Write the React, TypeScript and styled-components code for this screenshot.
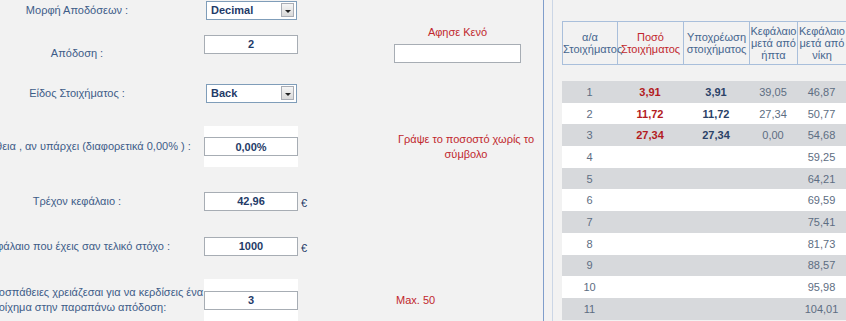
import styled, { createGlobalStyle } from "styled-components";

const GlobalStyle = createGlobalStyle`
  html, body {
    margin: 0;
    background: #f2f2f2;
    overflow: hidden;
  }
  body {
    font-family: "Liberation Sans", Arial, sans-serif;
  }
`;

const rows = [
  { no: 1, stake: "3,91", liability: "3,91", lose: "39,05", win: "46,87" },
  { no: 2, stake: "11,72", liability: "11,72", lose: "27,34", win: "50,77" },
  { no: 3, stake: "27,34", liability: "27,34", lose: "0,00", win: "54,68" },
  { no: 4, win: "59,25" },
  { no: 5, win: "64,21" },
  { no: 6, win: "69,59" },
  { no: 7, win: "75,41" },
  { no: 8, win: "81,73" },
  { no: 9, win: "88,57" },
  { no: 10, win: "95,98" },
  { no: 11, win: "104,01" },
];

const colWidths = [55, 66, 66, 48, 49];

const Cols = () => (
  <colgroup>
    {colWidths.map((w, i) => (
      <col key={i} style={{ width: w }} />
    ))}
  </colgroup>
);

export default function App() {
  return (
    <>
      <GlobalStyle />
      <Page>
        <FormArea>
          <FormRow $mt={0} $h={20}>
            <Label>Μορφή Αποδόσεων :</Label>
            <InputCell>
              <SelectBox>
                Decimal
                <ArrowBtn />
              </SelectBox>
            </InputCell>
          </FormRow>

          <FormRow $mt={5} $align="end">
            <Label>Απόδοση :</Label>
            <InputCell>
              <TextBox readOnly value="2" />
            </InputCell>
            <span />
            <NoteStack>
              <Note>Αφησε Κενό</Note>
              <BlankBox readOnly value="" />
            </NoteStack>
          </FormRow>

          <FormRow $mt={20} $h={20}>
            <Label>Είδος Στοιχήματος :</Label>
            <InputCell>
              <SelectBox>
                Back
                <ArrowBtn />
              </SelectBox>
            </InputCell>
          </FormRow>

          <FormRow $mt={23} $h={41}>
            <Label>Προμήθεια , αν υπάρχει (διαφορετικά 0,00% ) :</Label>
            <InputCell $white>
              <TextBox readOnly value="0,00%" />
            </InputCell>
            <span />
            <Note $center>Γράψε το ποσοστό χωρίς το σύμβολο</Note>
          </FormRow>

          <FormRow $mt={24} $h={20}>
            <Label>Τρέχον κεφάλαιο :</Label>
            <InputCell>
              <TextBox readOnly value="42,96" />
            </InputCell>
            <Euro>€</Euro>
          </FormRow>

          <FormRow $mt={25} $h={20}>
            <Label>Κεφάλαιο που έχεις σαν τελικό στόχο :</Label>
            <InputCell>
              <TextBox readOnly value="1000" />
            </InputCell>
            <Euro>€</Euro>
          </FormRow>

          <FormRow $mt={23} $h={42}>
            <Label>
              Πόσες προσπάθειες χρειάζεσαι για να κερδίσεις ένα στοίχημα στην
              παραπάνω απόδοση:
            </Label>
            <InputCell $white>
              <TextBox readOnly value="3" />
            </InputCell>
            <span />
            <Note>Max. 50</Note>
          </FormRow>
        </FormArea>

        <RightPanel>
          <Inner>
            <HeadTable>
              <Cols />
              <thead>
                <tr>
                  <HeadCell>
                    α/α
                    <br />
                    Στοιχήματος
                  </HeadCell>
                  <HeadCell $red>
                    Ποσό
                    <br />
                    Στοιχήματος
                  </HeadCell>
                  <HeadCell>
                    Υποχρέωση
                    <br />
                    στοιχήματος
                  </HeadCell>
                  <HeadCell>
                    Κεφάλαιο
                    <br />
                    μετά από
                    <br />
                    ήπτα
                  </HeadCell>
                  <HeadCell>
                    Κεφάλαιο
                    <br />
                    μετά από
                    <br />
                    νίκη
                  </HeadCell>
                </tr>
              </thead>
            </HeadTable>

            <DataTable>
              <Cols />
              <tbody>
                {rows.map((r) => (
                  <tr key={r.no}>
                    <Cell>{r.no}</Cell>
                    <Cell $kind="red">{r.stake}</Cell>
                    <Cell $kind="navy">{r.liability}</Cell>
                    <Cell>{r.lose}</Cell>
                    <Cell>{r.win}</Cell>
                  </tr>
                ))}
              </tbody>
            </DataTable>
          </Inner>
        </RightPanel>
      </Page>
    </>
  );
}

const Page = styled.div`
  display: flex;
  width: 846px;
  height: 321px;
  overflow: hidden;
`;

const FormArea = styled.div`
  flex: none;
  width: 593px;
  margin-left: -50px;
  display: flex;
  flex-direction: column;
`;

const FormRow = styled.div<{ $mt: number; $h?: number; $align?: string }>`
  display: grid;
  grid-template-columns: 254px 94px 96px 140px;
  align-items: ${({ $align }) => $align || "center"};
  margin-top: ${({ $mt }) => $mt}px;
  height: ${({ $h }) => ($h ? `${$h}px` : "auto")};
`;

const Label = styled.div`
  text-align: center;
  color: #3d5c88;
  font-size: 11px;
  line-height: 15px;
  padding: 2px 0;
`;

const InputCell = styled.div<{ $white?: boolean }>`
  align-self: stretch;
  display: flex;
  align-items: center;
  background: ${({ $white }) => ($white ? "#ffffff" : "transparent")};
`;

const TextBox = styled.input`
  box-sizing: border-box;
  width: 94px;
  height: 19px;
  margin: 0;
  padding: 0;
  border: 1px solid #a7adb4;
  background: #fff;
  font-family: "Liberation Sans", Arial, sans-serif;
  font-weight: bold;
  font-size: 11px;
  color: #1f3b68;
  text-align: center;
  outline: none;
`;

const SelectBox = styled.div`
  box-sizing: border-box;
  width: 91px;
  height: 19px;
  margin-left: 2px;
  padding-left: 4px;
  border: 1px solid #7f9db9;
  background: #fff;
  display: flex;
  align-items: center;
  font-weight: bold;
  font-size: 11px;
  color: #1f3b68;
`;

const ArrowBtn = styled.span`
  box-sizing: border-box;
  margin-left: auto;
  margin-right: 2px;
  width: 13px;
  height: 14px;
  border: 1px solid #a9adb5;
  background: linear-gradient(#f6f6f6, #d9d9d9);
  display: flex;
  align-items: center;
  justify-content: center;
  &::after {
    content: "";
    margin-top: 2px;
    border-left: 3px solid transparent;
    border-right: 3px solid transparent;
    border-top: 3px solid #222;
  }
`;

const Euro = styled.div`
  padding-left: 3px;
  padding-top: 3px;
  color: #1f3b68;
  font-size: 11px;
`;

const NoteStack = styled.div`
  display: flex;
  flex-direction: column;
  align-items: flex-start;
  gap: 4px;
`;

const Note = styled.div<{ $center?: boolean }>`
  color: #c1272d;
  font-size: 11px;
  line-height: 15px;
  width: ${({ $center }) => ($center ? "140px" : "127px")};
  text-align: ${({ $center }) => ($center ? "center" : "left")};
  padding-left: 2px;
  ${NoteStack} & {
    text-align: center;
    padding-left: 0;
  }
`;

const BlankBox = styled(TextBox)`
  width: 127px;
`;

const RightPanel = styled.div`
  flex: 1;
  display: flex;
  border-left: 1px solid #809ecb;
`;

const Inner = styled.div`
  flex: 1;
  margin-left: 8px;
  border-left: 1px solid #cbd6e6;
  padding: 21px 0 0 9px;
`;

const HeadTable = styled.table`
  border-collapse: collapse;
  table-layout: fixed;
  width: 284px;
`;

const HeadCell = styled.th<{ $red?: boolean }>`
  border: 1px solid #a9bfdb;
  padding: 0;
  height: 42px;
  font-weight: normal;
  font-size: 11px;
  line-height: 12px;
  text-align: center;
  color: ${({ $red }) => ($red ? "#c1272d" : "#46668f")};
`;

const DataTable = styled.table`
  margin-top: 16px;
  border-collapse: collapse;
  table-layout: fixed;
  width: 284px;
  tr:nth-child(odd) {
    background: #d7d9dc;
  }
  tr:nth-child(even) {
    background: #ffffff;
  }
`;

const Cell = styled.td<{ $kind?: "red" | "navy" }>`
  height: 21.7px;
  padding: 0;
  text-align: center;
  font-size: 11px;
  font-weight: ${({ $kind }) => ($kind ? "bold" : "normal")};
  color: ${({ $kind }) =>
    $kind === "red" ? "#b31b22" : $kind === "navy" ? "#2b4268" : "#5d6d82"};
`;
